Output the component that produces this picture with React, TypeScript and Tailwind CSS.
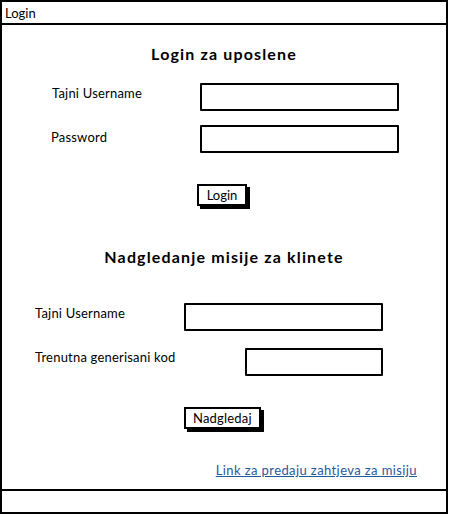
const font = { fontFamily: 'Lato, "Noto Sans", sans-serif' };

const Field = ({ label, labelWidth, inputWidth, pad, labelTop }: { label: string; labelWidth: string; inputWidth: string; pad: string; labelTop: string }) => (
    <div className={`flex items-start ${pad}`}>
        <span className={`${labelWidth} ${labelTop} text-[13px] leading-[18px] tracking-[0.2px] text-black`}>{label}</span>
        <div className={`${inputWidth} h-[28px] border-2 border-black rounded-[1px] bg-white`} />
    </div>
);

const App = () => {
    return (
        <div className="w-[450px] h-[516px] bg-white" style={font}>
            <div className="w-[448px] h-[514px] border-2 border-black flex flex-col">
                <div className="h-[23px] border-b-2 border-black flex items-center px-[3px]">
                    <span className="text-[13px] leading-[18px] text-black">Login</span>
                </div>

                <div className="flex-1 flex flex-col">
                    <h1 className="mt-[19px] text-center text-[16px] leading-[20px] font-bold text-black tracking-[1.15px]">Login za uposlene</h1>

                    <div className="mt-[19px]">
                        <Field label="Tajni Username" pad="pl-[50px]" labelWidth="w-[148px]" inputWidth="w-[199px]" labelTop="pt-[1px]" />
                    </div>
                    <div className="mt-[14px]">
                        <Field label="Password" pad="pl-[49px]" labelWidth="w-[149px]" inputWidth="w-[199px]" labelTop="pt-[3px]" />
                    </div>

                    <div className="mt-[31px] flex justify-center pr-[4px]">
                        <button className="h-[22px] px-[8px] border-2 border-black bg-white shadow-[3px_3px_0_#000] text-[13px] leading-[16px] text-black">Login</button>
                    </div>

                    <h2 className="mt-[41px] text-center text-[16px] leading-[20px] font-bold text-black tracking-[1.15px]">Nadgledanje misije za klinete</h2>

                    <div className="mt-[36px]">
                        <Field label="Tajni Username" pad="pl-[33px]" labelWidth="w-[149px]" inputWidth="w-[199px]" labelTop="pt-[1px]" />
                    </div>
                    <div className="mt-[17px]">
                        <Field label="Trenutna generisani kod" pad="pl-[33px]" labelWidth="w-[210px]" inputWidth="w-[138px]" labelTop="pt-0" />
                    </div>

                    <div className="mt-[31px] flex justify-start pl-[182px]">
                        <button className="h-[22px] px-[7px] border-2 border-black bg-white shadow-[3px_3px_0_#000] text-[13px] leading-[16px] tracking-[0.2px] text-black">Nadgledaj</button>
                    </div>

                    <div className="mt-[32px] flex justify-end pr-[29px]">
                        <a href="#" className="text-[13px] leading-[18px] tracking-[0.4px] text-[#1f5a9c] underline">Link za predaju zahtjeva za misiju</a>
                    </div>
                </div>

                <div className="h-[23px] border-t-2 border-black" />
            </div>
        </div>
    );
};

export default App;
